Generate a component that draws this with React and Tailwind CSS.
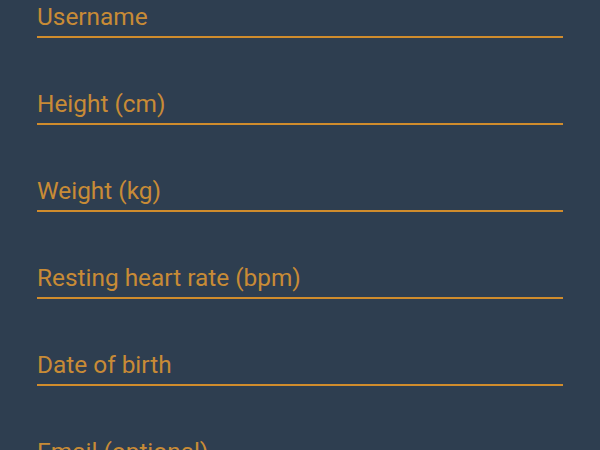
import React from 'react';

const fields = ['Username', 'Height (cm)', 'Weight (kg)', 'Resting heart rate (bpm)', 'Date of birth', 'Email (optional)'];

export default function App() {
    return (
        <div className="w-[600px] h-[450px] overflow-hidden bg-[#2e3e50]" style={{ fontFamily: 'Roboto, sans-serif' }}>
            <div className="flex flex-col gap-[52px] px-[37px] pt-[3px]">
                {fields.map((f) => (
                    <div key={f} className="border-b-2 border-[#d08c2c] pb-[5px]">
                        <div className="text-[24.4px] leading-[28px] text-[#c88b36]">{f}</div>
                    </div>
                ))}
            </div>
        </div>
    );
}
